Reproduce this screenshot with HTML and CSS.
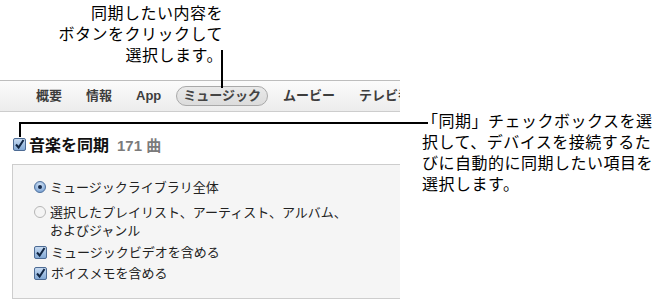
FILE: index.html
```html
<!DOCTYPE html>
<html lang="ja">
<head>
    <meta charset="UTF-8">
    <title>ミュージックの同期</title>
    <link rel="stylesheet" href="styles.css">
</head>
<body>
    <div class="page">
        <!-- Left: the iTunes pane with its top callout -->
        <div class="pane">
            <p class="note-top">同期したい内容を<br>ボタンをクリックして<br>選択します。</p>

            <div class="tabbar">
                <span class="tab">概要</span>
                <span class="tab">情報</span>
                <span class="tab">App</span>
                <span class="tab active">ミュージック</span>
                <span class="tab">ムービー</span>
                <span class="tab">テレビ番組</span>
            </div>

            <div class="sync-head">
                <svg class="check" width="13" height="13" viewBox="0 0 13 13">
                    <defs>
                        <linearGradient id="cb" x1="0" y1="0" x2="0" y2="1">
                            <stop offset="0" stop-color="#c9dcf2"/>
                            <stop offset="1" stop-color="#7fa6d3"/>
                        </linearGradient>
                    </defs>
                    <rect x="0.5" y="0.5" width="12" height="12" rx="1.5" fill="url(#cb)" stroke="#4d6b94"/>
                    <path d="M3 6.5 L5.6 9.5 L10.5 2" fill="none" stroke="#102542" stroke-width="2"/>
                </svg>
                <span class="sync-title">音楽を同期</span>
                <span class="sync-count">171 曲</span>
            </div>

            <div class="group">
                <div class="row">
                    <svg class="radio" width="12" height="12" viewBox="0 0 12 12">
                        <defs>
                            <radialGradient id="rb" cx="0.5" cy="0.35" r="0.7">
                                <stop offset="0" stop-color="#d6e6f7"/>
                                <stop offset="1" stop-color="#6f9ad0"/>
                            </radialGradient>
                        </defs>
                        <circle cx="6" cy="6" r="5.5" fill="url(#rb)" stroke="#52739e"/>
                        <circle cx="6" cy="6" r="2" fill="#14294a"/>
                    </svg>
                    <span>ミュージックライブラリ全体</span>
                </div>
                <div class="row second">
                    <svg class="radio" width="12" height="12" viewBox="0 0 12 12">
                        <circle cx="6" cy="6" r="5.5" fill="#f4f4f4" stroke="#b5b5b5"/>
                    </svg>
                    <span>選択したプレイリスト、アーティスト、アルバム、<br>およびジャンル</span>
                </div>
                <div class="row third">
                    <svg class="check" width="13" height="13" viewBox="0 0 13 13">
                        <rect x="0.5" y="0.5" width="12" height="12" rx="1.5" fill="url(#cb)" stroke="#4d6b94"/>
                        <path d="M3 6.5 L5.6 9.5 L10.5 2" fill="none" stroke="#102542" stroke-width="2"/>
                    </svg>
                    <span>ミュージックビデオを含める</span>
                </div>
                <div class="row fourth">
                    <svg class="check" width="13" height="13" viewBox="0 0 13 13">
                        <rect x="0.5" y="0.5" width="12" height="12" rx="1.5" fill="url(#cb)" stroke="#4d6b94"/>
                        <path d="M3 6.5 L5.6 9.5 L10.5 2" fill="none" stroke="#102542" stroke-width="2"/>
                    </svg>
                    <span>ボイスメモを含める</span>
                </div>
            </div>
        </div>

        <!-- Right: callout for the sync checkbox -->
        <p class="note-right">「同期」チェックボックスを選<br>択して、デバイスを接続するた<br>びに自動的に同期したい項目を<br>選択します。</p>

        <!-- leader lines -->
        <div class="leader leader-top"></div>
        <div class="leader leader-side"></div>
        <div class="leader leader-drop"></div>
    </div>
</body>
</html>
```

FILE: styles.css
```css
body {
    margin: 0;
    background: #ffffff;
    font-family: "Noto Sans CJK JP", "Liberation Sans", sans-serif;
    color: #000000;
}
.page {
    position: relative;
    display: flex;
    width: 664px;
    height: 306px;
    overflow: hidden;
}
.pane {
    width: 400px;
    flex: none;
    overflow: hidden;
}
.note-top {
    width: 223px;
    margin: 0;
    padding-top: 2px;
    font-size: 16px;
    line-height: 21px;
    letter-spacing: 0.5px;
    text-align: right;
}
.tabbar {
    display: flex;
    align-items: center;
    margin-top: 15px;
    height: 30px;
    padding-left: 24px;
    border-top: 1px solid #bdbdbd;
    border-bottom: 1px solid #cdcdcd;
    background: linear-gradient(#fbfbfb, #ececec);
    white-space: nowrap;
}
.tab {
    padding: 0 12px;
    font-family: "Liberation Sans", "Noto Sans CJK JP", sans-serif;
    font-size: 13px;
    font-weight: bold;
    color: #3d3d3d;
    line-height: 18px;
}
.tab.active {
    margin: 0 3px;
    padding: 0 6px;
    border: 1px solid #a9a9a9;
    border-radius: 10px;
    background: linear-gradient(#e9e9e9, #dcdcdc);
    color: #444444;
}
.sync-head {
    display: flex;
    align-items: center;
    margin-top: 22px;
    padding-left: 13px;
    height: 20px;
}
.sync-head .check {
    margin-right: 3px;
}
.sync-title {
    font-size: 16px;
    font-weight: bold;
    color: #111111;
}
.sync-count {
    margin-left: 8px;
    font-family: "Liberation Sans", "Noto Sans CJK JP", sans-serif;
    font-size: 15px;
    font-weight: bold;
    color: #7b7b7b;
}
.group {
    margin-top: 10px;
    margin-left: 12px;
    width: 420px;
    padding: 13px 0 16px 21px;
    border: 1px solid #cdcdcd;
    background: #f5f5f5;
}
.row {
    display: flex;
    align-items: flex-start;
    font-size: 13px;
    line-height: 18px;
    color: #222222;
}
.row svg {
    flex: none;
    margin-top: 3px;
    margin-right: 4px;
}
.row.second {
    margin-top: 7px;
}
.row.third {
    margin-top: 4px;
}
.row.fourth {
    margin-top: 3px;
}
.note-right {
    margin: 110px 0 0 0;
    padding-left: 22px;
    font-size: 16px;
    line-height: 21px;
    letter-spacing: 0.5px;
    white-space: nowrap;
}
.leader {
    position: absolute;
    background: #000000;
}
.leader-top {
    left: 221px;
    top: 50px;
    width: 2px;
    height: 38px;
}
.leader-side {
    left: 19px;
    top: 122px;
    width: 409px;
    height: 2px;
}
.leader-drop {
    left: 19px;
    top: 122px;
    width: 2px;
    height: 15px;
}
```
